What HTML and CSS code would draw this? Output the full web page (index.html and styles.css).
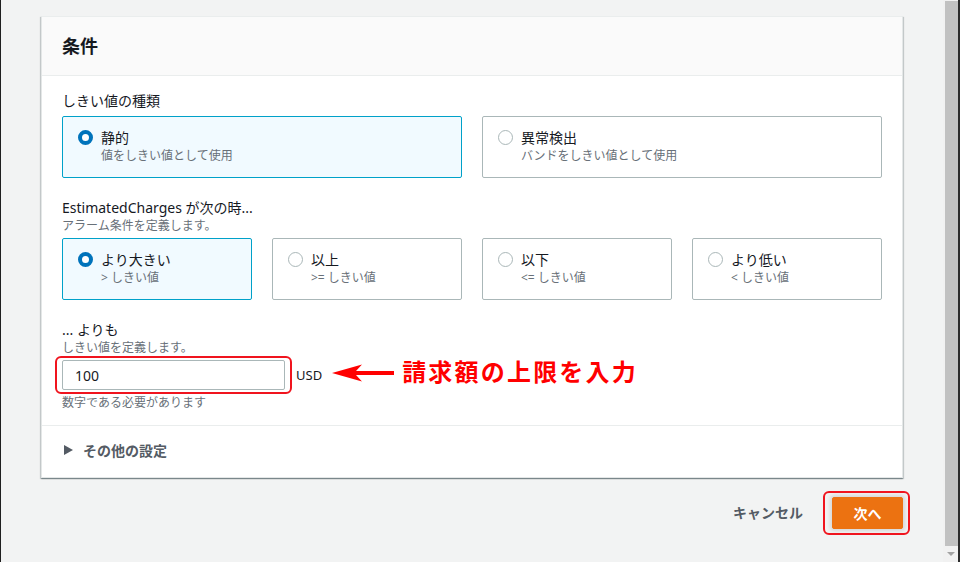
FILE: index.html
```html
<!DOCTYPE html>
<html lang="ja">
<head>
<meta charset="utf-8">
<title>条件</title>
<link rel="stylesheet" href="styles.css">
</head>
<body>
<div class="screen">
  <div class="edge"></div>
  <main class="main">
    <section class="card">
      <header class="card-head"><h2>条件</h2></header>
      <div class="card-body">
        <div class="field">
          <div class="label">しきい値の種類</div>
          <div class="tiles two">
            <div class="tile selected">
              <span class="radio on"></span>
              <div class="tile-text"><div class="t">静的</div><div class="d">値をしきい値として使用</div></div>
            </div>
            <div class="tile">
              <span class="radio"></span>
              <div class="tile-text"><div class="t">異常検出</div><div class="d">バンドをしきい値として使用</div></div>
            </div>
          </div>
        </div>
        <div class="field">
          <div class="label">EstimatedCharges が次の時...</div>
          <div class="desc">アラーム条件を定義します。</div>
          <div class="tiles four">
            <div class="tile selected">
              <span class="radio on"></span>
              <div class="tile-text"><div class="t">より大きい</div><div class="d">&gt; しきい値</div></div>
            </div>
            <div class="tile">
              <span class="radio"></span>
              <div class="tile-text"><div class="t">以上</div><div class="d">&gt;= しきい値</div></div>
            </div>
            <div class="tile">
              <span class="radio"></span>
              <div class="tile-text"><div class="t">以下</div><div class="d">&lt;= しきい値</div></div>
            </div>
            <div class="tile">
              <span class="radio"></span>
              <div class="tile-text"><div class="t">より低い</div><div class="d">&lt; しきい値</div></div>
            </div>
          </div>
        </div>
        <div class="field">
          <div class="label">... よりも</div>
          <div class="desc">しきい値を定義します。</div>
          <div class="input-row">
            <div class="input-wrap">
              <input class="input" type="text" value="100">
              <span class="mark"></span>
            </div>
            <span class="unit">USD</span>
            <svg class="arrow" width="64" height="20" viewBox="0 0 64 20">
              <path d="M0 10 L30 1.5 L24 8 L62 8 L62 12 L24 12 L30 18.5 Z" fill="#f00"/>
            </svg>
            <span class="note">請求額の上限を入力</span>
          </div>
          <div class="hint">数字である必要があります</div>
        </div>
      </div>
      <div class="expander">
        <svg class="caret" width="9" height="10" viewBox="0 0 9 10"><path d="M0 0 L9 5 L0 10 Z" fill="#545b64"/></svg>
        <span>その他の設定</span>
      </div>
    </section>
    <div class="footer">
      <button class="link-btn">キャンセル</button>
      <div class="primary-wrap">
        <button class="primary">次へ</button>
        <span class="mark mark-btn"></span>
      </div>
    </div>
  </main>
  <div class="scrollbar">
    <div class="thumb"></div>
    <div class="down"></div>
  </div>
</div>
</body>
</html>
```

FILE: styles.css
```css
* { box-sizing: border-box; }
html, body { margin: 0; padding: 0; }
body {
  background: #f2f3f3;
  font-family: "Noto Sans", "Noto Sans CJK JP", sans-serif;
  color: #16191f;
  width: 960px;
  height: 562px;
  overflow: hidden;
}
.screen { display: flex; height: 562px; }
.edge { width: 1px; background: #1f1f1f; flex: none; }
.main { flex: 1; padding: 16px 0 0 40px; }
.card {
  width: 862px;
  background: #fff;
  border: 1px solid #e4e7e7;
  border-top-color: #eaeded;
  box-shadow: 0 1px 1px 0 rgba(0,28,36,0.3), 1px 1px 1px 0 rgba(0,28,36,0.15), -1px 1px 1px 0 rgba(0,28,36,0.15);
}
.card-head {
  height: 59px;
  background: #fafafa;
  border-bottom: 1px solid #eaeded;
  padding: 0 20px;
  display: flex;
  align-items: center;
}
.card-head h2 {
  margin: 0;
  font-size: 18px;
  font-weight: 700;
  line-height: 24px;
}
.card-body { padding: 15px 20px 14px; border-bottom: 1px solid #eaeded; }
.field + .field { margin-top: 20px; }
.label { font-size: 14px; line-height: 20px; }
.desc { font-size: 12px; line-height: 16px; color: #687078; margin-top: 0; }
.tiles { display: grid; gap: 20px; margin-top: 5px; }
.desc + .tiles { margin-top: 4px; }
.tiles.two { grid-template-columns: 400px 400px; }
.tiles.four { grid-template-columns: repeat(4, 190px); }
.tile {
  height: 62px;
  border: 1px solid #aab7b8;
  border-radius: 2px;
  padding: 11px 14px 0 15px;
  display: flex;
  align-items: flex-start;
  gap: 8px;
  background: #fff;
}
.tile.selected { border-color: #00a1c9; background: #f1faff; }
.radio {
  flex: none;
  width: 15px;
  height: 15px;
  margin-top: 2px;
  border-radius: 50%;
  border: 1.5px solid #aab7b8;
  background: #fff;
}
.radio.on { border: 4.5px solid #0073bb; }
.tile-text .t { font-size: 14px; line-height: 19px; }
.tile-text .d { font-size: 12px; line-height: 18px; color: #687078; }
.input-row {
  display: flex;
  align-items: center;
  margin-top: 4px;
  height: 30px;
}
.input-wrap { position: relative; width: 223px; height: 30px; }
.input {
  width: 223px;
  height: 30px;
  border: 1px solid #aab7b8;
  border-radius: 2px;
  padding: 0 12px;
  font-family: "Noto Sans", "Noto Sans CJK JP", sans-serif;
  font-size: 14px;
  color: #16191f;
  background: #fff;
  outline: none;
}
.mark {
  position: absolute;
  top: -4px; bottom: -4px; left: -7px; right: -7px;
  border: 2px solid #f0141e;
  border-radius: 6px;
  pointer-events: none;
}
.unit { font-size: 13px; margin-left: 11px; color: #16191f; }
.arrow { margin-left: 10px; margin-top: -4px; }
.note {
  margin-left: 6px;
  margin-top: -6px;
  font-size: 24px;
  font-weight: 700;
  color: #f00;
  letter-spacing: 2.2px;
  line-height: 30px;
}
.hint { font-size: 12px; line-height: 16px; color: #687078; margin-top: 5px; }
.expander {
  height: 51px;
  padding: 0 0 3px 22px;
  display: flex;
  align-items: center;
  gap: 10px;
  font-size: 14px;
  font-weight: 700;
  color: #545b64;
}
.footer {
  width: 862px;
  display: flex;
  justify-content: flex-end;
  align-items: center;
  margin-top: 19px;
}
.link-btn {
  background: none;
  border: none;
  font-family: "Noto Sans", "Noto Sans CJK JP", sans-serif;
  font-size: 14px;
  font-weight: 700;
  color: #545b64;
  padding: 0;
  margin-right: 29px;
  line-height: 32px;
}
.primary-wrap { position: relative; }
.primary {
  display: block;
  width: 71px;
  height: 32px;
  background: #ec7211;
  border: 1px solid #ec7211;
  border-radius: 2px;
  color: #fff;
  font-family: "Noto Sans", "Noto Sans CJK JP", sans-serif;
  font-size: 14px;
  font-weight: 700;
  padding: 0;
  box-shadow: 0 0 4px 2px rgba(0,0,0,0.12);
}
.mark-btn { top: -6px; bottom: -6px; left: -9px; right: -7px; }
.scrollbar {
  width: 17px;
  flex: none;
  background: #f1f1f1;
  border-right: 2px solid #2b2b2b;
  display: flex;
  flex-direction: column;
  align-items: center;
  padding: 1px 0 0 1px;
}
.thumb { width: 13px; height: 545px; background: #c1c1c1; }
.down {
  margin-top: 6px;
  width: 0; height: 0;
  border-left: 4px solid transparent;
  border-right: 4px solid transparent;
  border-top: 4px solid #a3a3a3;
}
```
